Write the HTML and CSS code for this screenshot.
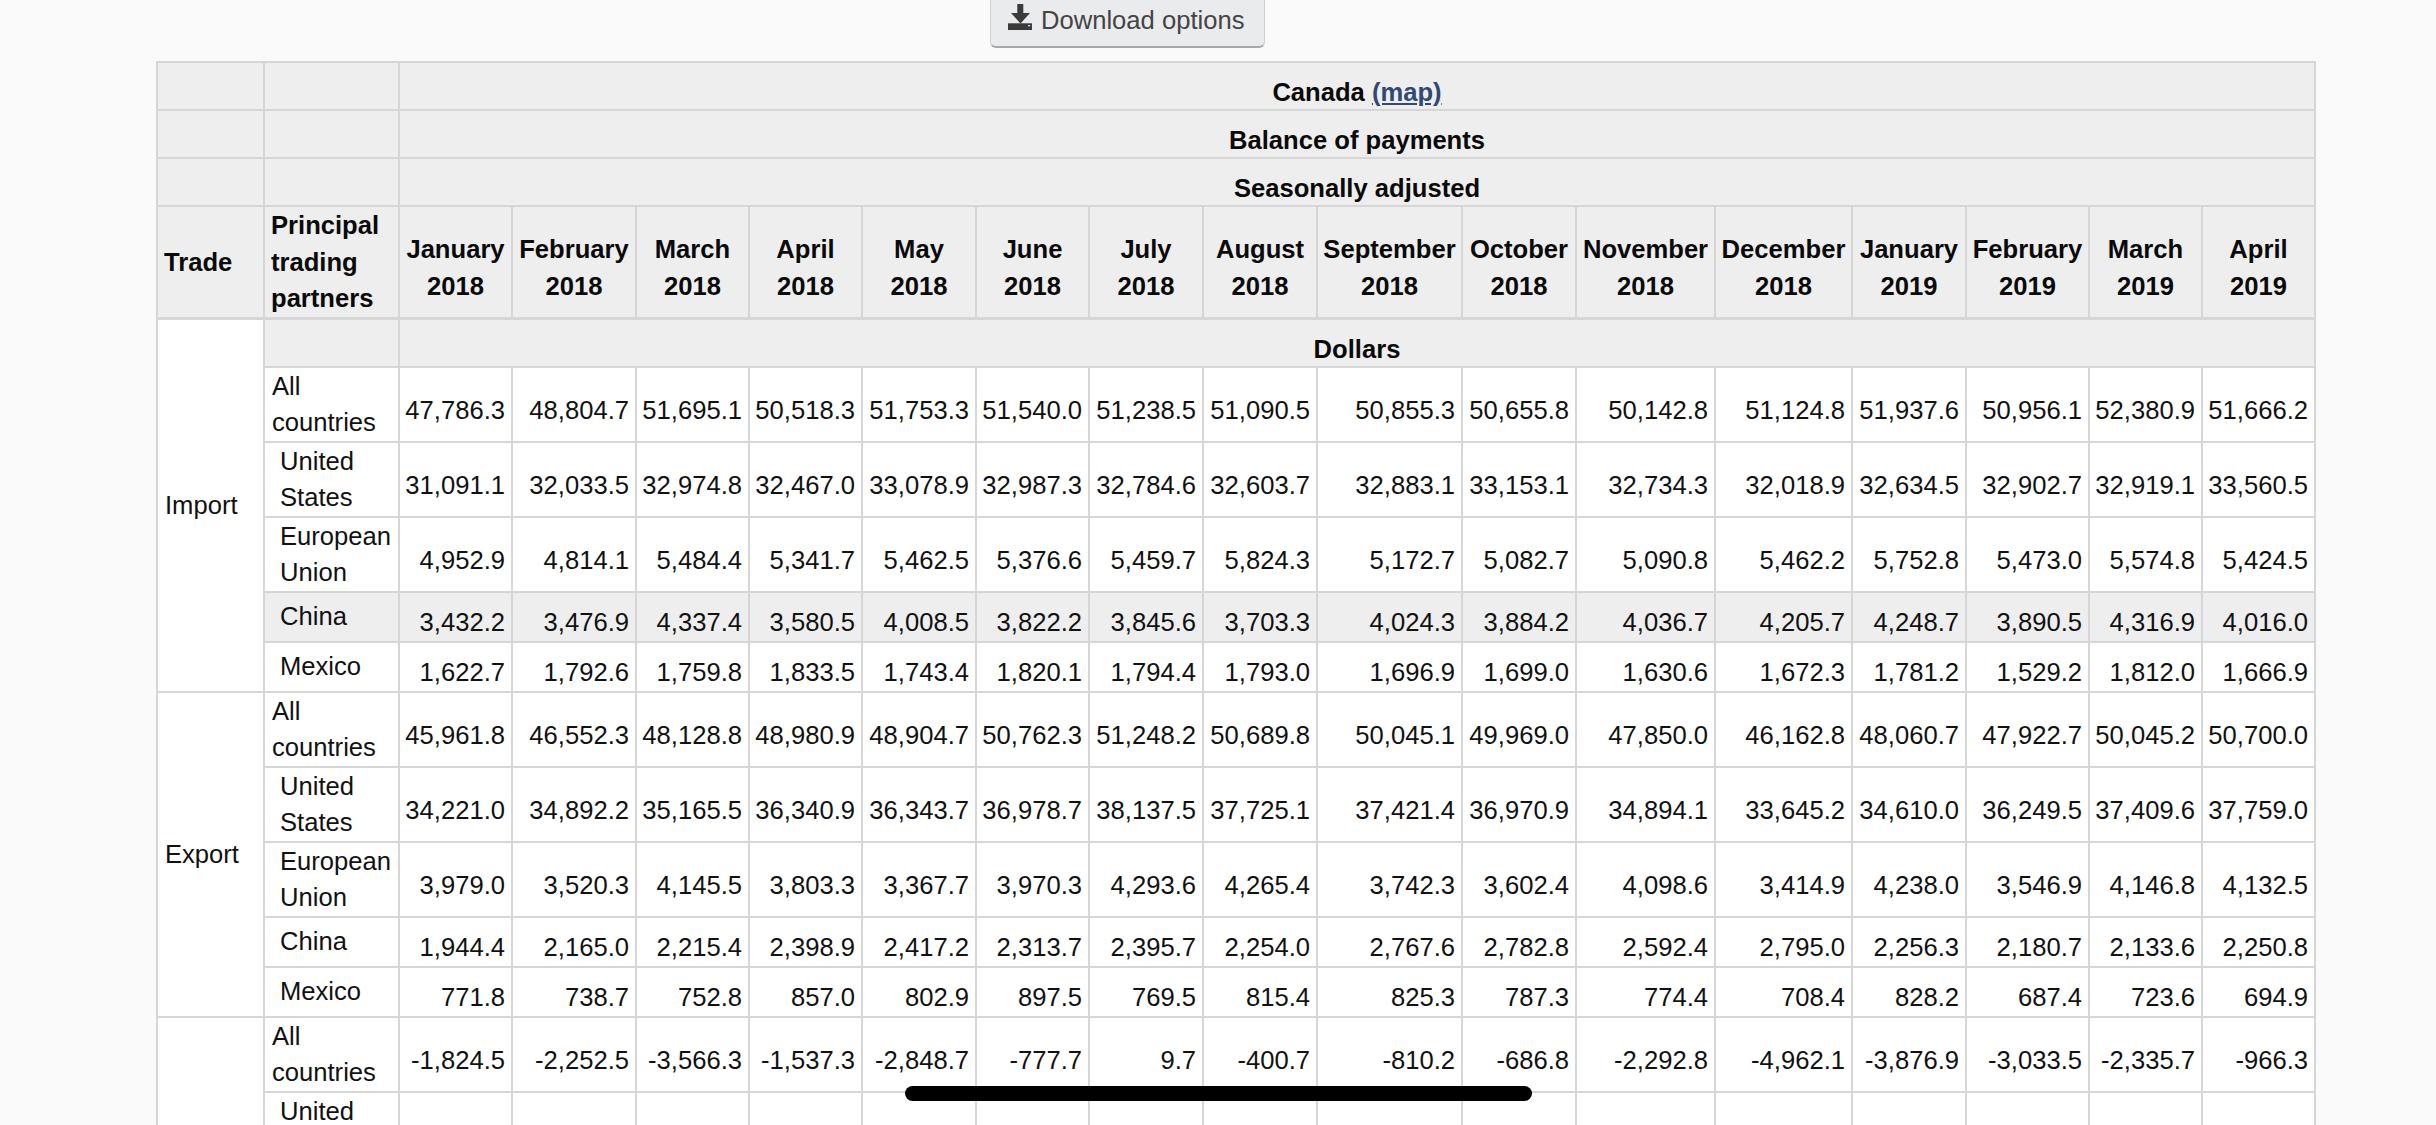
FILE: index.html
```html
<!DOCTYPE html>
<html lang="en">
<head>
<meta charset="utf-8">
<title>Balance of payments</title>
<link rel="stylesheet" href="styles.css">
</head>
<body>
<div class="page">
  <div class="toolbar">
    <button class="download" type="button">
      <svg class="download-icon" viewBox="0 0 24 26" aria-hidden="true">
        <rect x="9.3" y="0" width="6" height="9.5"/>
        <polygon points="3,9 22,9 12.5,19.5"/>
        <rect x="0" y="19.3" width="24" height="6.7"/>
        <rect class="download-led" x="20" y="21" width="2.2" height="1.4"/>
      </svg>
      <span>Download options</span>
    </button>
  </div>
  <table class="data">
    <colgroup>
      <col class="c107"><col class="c135"><col class="c113"><col class="c124"><col class="c113"><col class="c113"><col class="c114"><col class="c113"><col class="c114"><col class="c114"><col class="c145"><col class="c114"><col class="c139"><col class="c137"><col class="c114"><col class="c123"><col class="c113"><col class="c113">
    </colgroup>
    <thead>
      <tr><th></th><th></th><th colspan="16" class="span single">Canada <a href="#">(map)</a></th></tr>
      <tr><th></th><th></th><th colspan="16" class="span single">Balance of payments</th></tr>
      <tr><th></th><th></th><th colspan="16" class="span single">Seasonally adjusted</th></tr>
      <tr class="months">
        <th class="side">Trade</th><th class="side">Principal trading partners</th>
        <th class="span">January 2018</th><th class="span">February 2018</th><th class="span">March 2018</th><th class="span">April 2018</th><th class="span">May 2018</th><th class="span">June 2018</th><th class="span">July 2018</th><th class="span">August 2018</th><th class="span">September 2018</th><th class="span">October 2018</th><th class="span">November 2018</th><th class="span">December 2018</th><th class="span">January 2019</th><th class="span">February 2019</th><th class="span">March 2019</th><th class="span">April 2019</th>
      </tr>
    </thead>
    <tbody>
      <tr><td class="trade" rowspan="6">Import</td><th></th><th colspan="16" class="span single">Dollars</th></tr>
      <tr><td class="partner">All countries</td><td>47,786.3</td><td>48,804.7</td><td>51,695.1</td><td>50,518.3</td><td>51,753.3</td><td>51,540.0</td><td>51,238.5</td><td>51,090.5</td><td>50,855.3</td><td>50,655.8</td><td>50,142.8</td><td>51,124.8</td><td>51,937.6</td><td>50,956.1</td><td>52,380.9</td><td>51,666.2</td></tr>
      <tr><td class="partner sub">United States</td><td>31,091.1</td><td>32,033.5</td><td>32,974.8</td><td>32,467.0</td><td>33,078.9</td><td>32,987.3</td><td>32,784.6</td><td>32,603.7</td><td>32,883.1</td><td>33,153.1</td><td>32,734.3</td><td>32,018.9</td><td>32,634.5</td><td>32,902.7</td><td>32,919.1</td><td>33,560.5</td></tr>
      <tr><td class="partner sub">European Union</td><td>4,952.9</td><td>4,814.1</td><td>5,484.4</td><td>5,341.7</td><td>5,462.5</td><td>5,376.6</td><td>5,459.7</td><td>5,824.3</td><td>5,172.7</td><td>5,082.7</td><td>5,090.8</td><td>5,462.2</td><td>5,752.8</td><td>5,473.0</td><td>5,574.8</td><td>5,424.5</td></tr>
      <tr class="shaded"><td class="partner sub">China</td><td>3,432.2</td><td>3,476.9</td><td>4,337.4</td><td>3,580.5</td><td>4,008.5</td><td>3,822.2</td><td>3,845.6</td><td>3,703.3</td><td>4,024.3</td><td>3,884.2</td><td>4,036.7</td><td>4,205.7</td><td>4,248.7</td><td>3,890.5</td><td>4,316.9</td><td>4,016.0</td></tr>
      <tr><td class="partner sub">Mexico</td><td>1,622.7</td><td>1,792.6</td><td>1,759.8</td><td>1,833.5</td><td>1,743.4</td><td>1,820.1</td><td>1,794.4</td><td>1,793.0</td><td>1,696.9</td><td>1,699.0</td><td>1,630.6</td><td>1,672.3</td><td>1,781.2</td><td>1,529.2</td><td>1,812.0</td><td>1,666.9</td></tr>
      <tr><td class="trade" rowspan="5">Export</td><td class="partner">All countries</td><td>45,961.8</td><td>46,552.3</td><td>48,128.8</td><td>48,980.9</td><td>48,904.7</td><td>50,762.3</td><td>51,248.2</td><td>50,689.8</td><td>50,045.1</td><td>49,969.0</td><td>47,850.0</td><td>46,162.8</td><td>48,060.7</td><td>47,922.7</td><td>50,045.2</td><td>50,700.0</td></tr>
      <tr><td class="partner sub">United States</td><td>34,221.0</td><td>34,892.2</td><td>35,165.5</td><td>36,340.9</td><td>36,343.7</td><td>36,978.7</td><td>38,137.5</td><td>37,725.1</td><td>37,421.4</td><td>36,970.9</td><td>34,894.1</td><td>33,645.2</td><td>34,610.0</td><td>36,249.5</td><td>37,409.6</td><td>37,759.0</td></tr>
      <tr><td class="partner sub">European Union</td><td>3,979.0</td><td>3,520.3</td><td>4,145.5</td><td>3,803.3</td><td>3,367.7</td><td>3,970.3</td><td>4,293.6</td><td>4,265.4</td><td>3,742.3</td><td>3,602.4</td><td>4,098.6</td><td>3,414.9</td><td>4,238.0</td><td>3,546.9</td><td>4,146.8</td><td>4,132.5</td></tr>
      <tr><td class="partner sub">China</td><td>1,944.4</td><td>2,165.0</td><td>2,215.4</td><td>2,398.9</td><td>2,417.2</td><td>2,313.7</td><td>2,395.7</td><td>2,254.0</td><td>2,767.6</td><td>2,782.8</td><td>2,592.4</td><td>2,795.0</td><td>2,256.3</td><td>2,180.7</td><td>2,133.6</td><td>2,250.8</td></tr>
      <tr><td class="partner sub">Mexico</td><td>771.8</td><td>738.7</td><td>752.8</td><td>857.0</td><td>802.9</td><td>897.5</td><td>769.5</td><td>815.4</td><td>825.3</td><td>787.3</td><td>774.4</td><td>708.4</td><td>828.2</td><td>687.4</td><td>723.6</td><td>694.9</td></tr>
      <tr><td class="trade" rowspan="2"></td><td class="partner">All countries</td><td>-1,824.5</td><td>-2,252.5</td><td>-3,566.3</td><td>-1,537.3</td><td>-2,848.7</td><td>-777.7</td><td>9.7</td><td>-400.7</td><td>-810.2</td><td>-686.8</td><td>-2,292.8</td><td>-4,962.1</td><td>-3,876.9</td><td>-3,033.5</td><td>-2,335.7</td><td>-966.3</td></tr>
      <tr><td class="partner sub">United States</td><td></td><td></td><td></td><td></td><td></td><td></td><td></td><td></td><td></td><td></td><td></td><td></td><td></td><td></td><td></td><td></td></tr>
    </tbody>
  </table>
  <div class="home-bar"></div>
</div>
</body>
</html>
```
FILE: styles.css
```css
html, body {
  margin: 0;
  padding: 0;
  height: 100%;
  overflow: hidden;
  background: #fafafa;
}

.page {
  position: relative;
  height: 1125px;
  overflow: hidden;
  padding-left: 156px;
  font-family: "Liberation Sans", Arial, sans-serif;
  font-size: 25.6px;
  color: #111;
}

.toolbar {
  display: flex;
  height: 48px;
  margin-bottom: 13px;
  padding-left: 834px;
}

.download {
  display: flex;
  align-items: center;
  gap: 9px;
  width: 275px;
  height: 48px;
  box-sizing: border-box;
  margin: 0;
  padding: 0 0 5px 17px;
  border: 1.5px solid #cfd0d2;
  border-top: 0;
  border-bottom: 2.5px solid #a8a8a8;
  border-radius: 0 0 6px 6px;
  background: #eaebed;
  color: #444;
  font: inherit;
}

.download-icon {
  width: 24px;
  height: 26px;
  flex: none;
  align-self: flex-start;
  margin-top: 4px;
  fill: #3b3b3b;
}

.download-led {
  fill: #cfcfcf;
}

.data {
  width: 2160px;
  table-layout: fixed;
  border-collapse: collapse;
  line-height: 36.5px;
}

.c107 { width: 107px; }
.c113 { width: 113px; }
.c114 { width: 114px; }
.c123 { width: 123px; }
.c124 { width: 124px; }
.c135 { width: 135px; }
.c137 { width: 137px; }
.c139 { width: 139px; }
.c145 { width: 145px; }

.data th,
.data td {
  border: 2px solid #d6d6d6;
  overflow: visible;
  white-space: normal;
}

.data th {
  padding: 9.5px 4px 0;
  background: #eee;
  font-weight: 700;
  color: #0a0a0a;
}

.data th.span {
  padding-top: 12px;
  text-align: center;
}

.data th.single {
  line-height: 34px;
}

.data th.side {
  padding: 0 4px 0 6px;
  text-align: left;
}

.data td {
  padding: 11.5px 6px 0 2px;
  background: #fff;
  text-align: right;
  white-space: nowrap;
}

.data .months th {
  border-bottom-width: 3px;
}

.data td.trade {
  padding: 0 4px 0 7px;
  text-align: left;
}

.data td.partner {
  padding: 0 4px 0 7px;
  text-align: left;
  white-space: normal;
}

.data td.sub {
  padding-left: 15px;
}

.data .shaded td {
  background: #eee;
}

.data a {
  color: #2f4a74;
  text-decoration: underline;
}

.home-bar {
  position: absolute;
  left: 905px;
  top: 1086px;
  width: 627px;
  height: 15px;
  border-radius: 8px;
  background: #000;
}
```
